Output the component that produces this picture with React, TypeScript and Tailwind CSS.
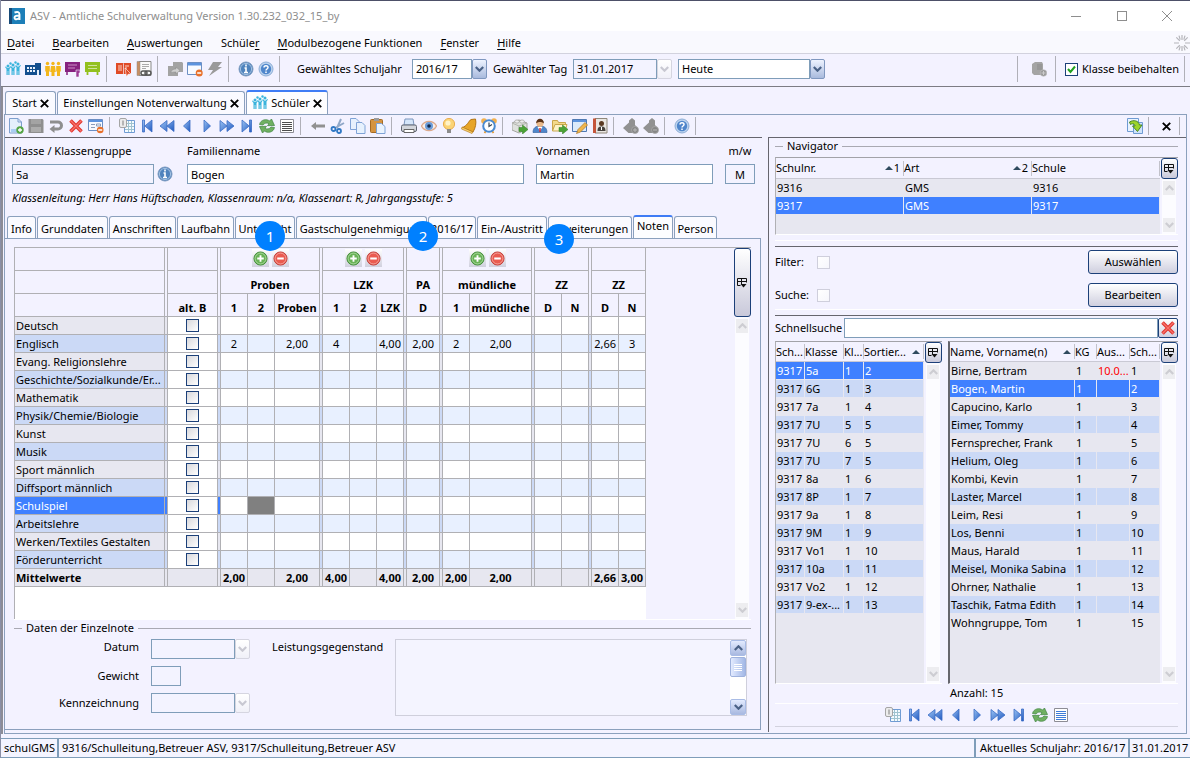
import type { ReactNode } from "react";

type IconProps = { children: ReactNode; size?: string };

const Svg = ({ children, size = "h-4 w-4" }: IconProps) => (
  <svg viewBox="0 0 16 16" className={`${size} shrink-0`} fill="none" aria-hidden="true">
    {children}
  </svg>
);

/* ---------- icons ---------- */

const GroupIcon = () => (
  <Svg>
    <g fill="#3bb4dc">
      <circle cx="3" cy="5" r="1.5" />
      <circle cx="8" cy="4" r="1.5" />
      <circle cx="13" cy="3" r="1.5" />
      <circle cx="5.5" cy="2.5" r="1.2" />
      <circle cx="10.500" cy="1.5" r="1.2" />
      <path d="M0 6l1.500 2v6h1.200v-4h.6v4h1.200V8L6 6l-.8-.6L3.800 7H2.200L.8 5.400zM5.300 5.500l1.200 2V14h1.200v-4h.6v4h1.200V7.500l1.200-2-.8-.6L8.800 6.500H7.200L6.100 4.900zM10.300 4.500l1.200 2V14h1.200v-4h.6v4h1.200V6.500L16 4.500l-.8-.6-1.400 1.600h-1.600l-1.100-1.600z" />
    </g>
  </Svg>
);

const SchoolIcon = () => (
  <Svg>
    <path d="M0 4h10V2h6v12H0z" fill="#134f8f" />
    <path d="M2 6h2v2H2zM5 6h2v2H5zM8 6h2v2H8zM2 9h2v2H2zM5 9h2v2H5zM8 9h2v2H8zM12 9h2v5h-2z" fill="#e8f0fa" />
  </Svg>
);

const PeopleIcon = () => (
  <Svg>
    <g fill="#f3b61b">
      <circle cx="2.500" cy="2.500" r="1.700" />
      <circle cx="8" cy="2.500" r="1.700" />
      <circle cx="13.500" cy="2.500" r="1.700" />
      <path d="M.2 5h4.600v5.500H4V15H1v-4.500H.2zM6 5h4l.8 6H9.500v4h-3v-4H5.200zM11.200 5h4.600v5.500H15V15h-3v-4.500h-.8z" />
    </g>
  </Svg>
);

const PurpleBoardIcon = () => (
  <Svg>
    <path d="M0 1h15v10H0z" fill="#86217f" />
    <path d="M3 4h9M3 7h7" stroke="#c98fc6" />
    <path d="M2 11v3" stroke="#86217f" strokeWidth="1.500" />
    <path d="M11 9h4v3h-1v4h-3z" fill="#9c3a95" stroke="#f3f2ff" strokeWidth=".6" />
  </Svg>
);

const GreenBoardIcon = () => (
  <Svg>
    <path d="M0 1h15v10H0z" fill="#93c01f" />
    <path d="M3 4.500h9M3 7.500h9" stroke="#cfe39a" />
    <path d="M2.500 11v3M12.500 11v3" stroke="#93c01f" strokeWidth="1.800" />
  </Svg>
);

const RedBookIcon = () => (
  <Svg>
    <path d="M0 2h7l.5 1L8 2h7v11H0z" fill="#e04a26" />
    <path d="M2 5h4M2 7h4M2 9h4M9 5h4M9 7h2" stroke="#fbd3c6" />
    <path d="M7.500 3v10" stroke="#f3f2ff" strokeWidth=".7" />
    <path d="M9 7l6 6-3 .3L10.500 16z" fill="#e04a26" stroke="#fff" strokeWidth=".6" />
  </Svg>
);

const NotebookIcon = () => (
  <Svg>
    <path d="M3 .5h12v14H3z" fill="#fafafa" stroke="#8a8a8a" />
    <path d="M1 .5h3v14H1z" fill="#c98e62" stroke="#8a8a8a" strokeWidth=".5" />
    <path d="M6 3.500h7M6 5.500h7M6 7.500h4" stroke="#aaa" />
    <rect x="5" y="10" width="6" height="4" rx="2" stroke="#555" strokeWidth="1.400" />
    <rect x="9" y="10" width="6" height="4" rx="2" stroke="#555" strokeWidth="1.400" />
  </Svg>
);

const GrayCopyIcon = () => (
  <Svg>
    <path d="M6 1h9l1 1v9h-5v4H1V5h5z" fill="#a3a3a3" />
    <path d="M4 12c0-3 2-4 5-4V6l4 3.500L9 13v-2c-2 0-4 0-5 1z" fill="#cfcfcf" stroke="#8b8b8b" strokeWidth=".5" />
  </Svg>
);

const WindowIcon = () => (
  <Svg>
    <path d="M.5 1.500h14v12H.5z" fill="#f7faff" stroke="#6c8fc4" />
    <path d="M1 2h13v2.500H1z" fill="#5c93de" />
    <circle cx="12.200" cy="12" r="3.500" fill="#e8702a" />
    <path d="M10.200 12h4" stroke="#fff" strokeWidth="1.500" />
  </Svg>
);

const BoltIcon = () => (
  <Svg>
    <path d="M6 1h9l-4 5h4L2 15l4-6H1z" fill="#9a9a9a" />
  </Svg>
);

const InfoIcon = () => (
  <Svg>
    <circle cx="8" cy="8" r="7" fill="#4f83bd" stroke="#7c9abf" />
    <circle cx="8" cy="8" r="5.600" stroke="#b9d0ea" strokeWidth=".8" />
    <path d="M8 3.500v2M6.500 7H8v4.500M6 11.500h4" stroke="#fff" strokeWidth="1.600" />
  </Svg>
);

const HelpIcon = () => (
  <Svg>
    <circle cx="8" cy="8" r="7" fill="#bcd3ee" stroke="#8eaed6" />
    <circle cx="8" cy="8" r="5.200" fill="#4f86cb" />
    <path d="M6 6.600C6 4 10 4 10 6.500 10 8 8 8 8 9.500M8 10.500v1.500" stroke="#fff" strokeWidth="1.500" />
  </Svg>
);

const NewIcon = () => (
  <Svg>
    <path d="M1.500.5H10L13.500 4v11h-12z" fill="#e4effb" stroke="#7e9fcd" />
    <path d="M10 .5V4h3.500" stroke="#7e9fcd" />
    <path d="M3 11h8v3H3z" fill="#a9cdf2" />
    <circle cx="12" cy="12" r="3.700" fill="#55a545" />
    <path d="M12 10v4M10 12h4" stroke="#fff" strokeWidth="1.300" />
  </Svg>
);

const SaveIcon = () => (
  <Svg>
    <path d="M.5 1h14l1 1v13H.5z" fill="#8f8f8f" />
    <path d="M3 1h10v5H3z" fill="#a3a3a3" />
    <path d="M3 9h10v5H3z" fill="#acacac" />
  </Svg>
);

const UndoIcon = () => (
  <Svg>
    <path d="M2 4h8a3.500 3.500 0 0 1 0 7H5" stroke="#8e8e8e" strokeWidth="3" />
    <path d="M6.500 7v8l-5-4z" fill="#8e8e8e" />
  </Svg>
);

const RedCrossIcon = () => (
  <Svg>
    <path d="M2.500 2.500l11 11M13.500 2.500l-11 11" stroke="#e0352f" strokeWidth="3.600" />
    <path d="M2.500 2.500l11 11M13.500 2.500l-11 11" stroke="#f8736b" strokeWidth="1.400" />
  </Svg>
);

const FormDeleteIcon = () => (
  <Svg>
    <path d="M.5 1.500h14v11H.5z" fill="#f7faff" stroke="#6c8fc4" />
    <path d="M1 2h13v2H1z" fill="#5c93de" />
    <path d="M3 6.500h4M3 9.500h4M8.500 6h4v2h-4z" stroke="#8c9dba" />
    <circle cx="12.200" cy="12" r="3.300" fill="#e8702a" />
    <path d="M10.200 12h4" stroke="#fff" strokeWidth="1.500" />
  </Svg>
);

const TableIcon = () => (
  <Svg>
    <path d="M5.500 2.500h10v12h-10z" fill="#f4faff" stroke="#6f9bd3" />
    <path d="M6 5.500h9M6 8.500h9M6 11.500h9M9.500 3v11M12.500 3v11" stroke="#9fc3cf" />
    <rect x=".5" y=".5" width="7" height="9" rx="1.500" fill="#ececec" stroke="#a5a5a5" />
    <path d="M3.500 2.500v5M4.500 2.500v5" stroke="#b5b5b5" />
  </Svg>
);

// gradient is defined once in App
const navFill = { fill: "url(#navBlue)", stroke: "#3a6cc4", strokeWidth: 0.8 };

const FirstIcon = () => (
  <Svg>
    <path d="M3.500 2h2v12h-2zM13 2v12L5.800 8z" {...navFill} />
  </Svg>
);

const RewindIcon = () => (
  <Svg>
    <path d="M8 2.500v11L1 8zM15 2.500v11L8 8z" {...navFill} />
  </Svg>
);

const PrevIcon = () => (
  <Svg>
    <path d="M11 2v12L4.500 8z" {...navFill} />
  </Svg>
);

const NextIcon = () => (
  <Svg>
    <path d="M5 2v12l6.500-6z" {...navFill} />
  </Svg>
);

const ForwardIcon = () => (
  <Svg>
    <path d="M1 2.500v11L8 8zM8 2.500v11L15 8z" {...navFill} />
  </Svg>
);

const LastIcon = () => (
  <Svg>
    <path d="M10.500 2h2v12h-2zM3 2v12l7.200-6z" {...navFill} />
  </Svg>
);

const RefreshIcon = () => (
  <Svg>
    <path d="M.5 6.500c1-5 7-6 10-3.500l2-2L15.500 7.500l-7 .2 1.500-2C8 4.500 5.500 5 4 7z" fill="#6fb061" stroke="#3f8440" strokeWidth=".7" />
    <path d="M15.500 9.500c-1 5-7 6-10 3.500l-2 2L.5 8.500l7-.2-1.500 2c2 1.200 4.500.7 6-1.300z" fill="#6fb061" stroke="#3f8440" strokeWidth=".7" />
  </Svg>
);

const ListIcon = ({ color = "#4d4d4d" }: { color?: string }) => (
  <Svg>
    <path d="M1.500 1.500h13v13h-13z" fill="#fff" stroke="#8d8d95" />
    <path d="M3 4.500h10M3 6.500h10M3 8.500h10M3 10.500h10M3 12.500h10" stroke={color} />
  </Svg>
);

const BackIcon = () => (
  <Svg>
    <path d="M1 8l5-4v2.500h9v3H6V12z" fill="#919191" />
  </Svg>
);

const CutIcon = () => (
  <Svg>
    <path d="M11 1 7 10M14 5 5 10" stroke="#90a8c8" strokeWidth="2" />
    <circle cx="3.500" cy="11" r="2" stroke="#2f78c4" strokeWidth="1.800" />
    <circle cx="9" cy="13" r="2" stroke="#2f78c4" strokeWidth="1.800" />
  </Svg>
);

const CopyIcon = () => (
  <Svg>
    <path d="M.5.5H6l3 3v8H.5z" fill="#e6f1fd" stroke="#7fa3d6" />
    <path d="M6.500 4.500H12l3 3v8H6.500z" fill="#e6f1fd" stroke="#7fa3d6" />
  </Svg>
);

const PasteIcon = () => (
  <Svg>
    <rect x=".5" y="1.500" width="12" height="13" rx="1" fill="#d59440" stroke="#a46a22" />
    <path d="M4 0h5v3H4z" fill="#9b9b9b" />
    <path d="M6.500 5.500h5l3.500 3v7H6.500z" fill="#eaf3fd" stroke="#7fa3d6" />
  </Svg>
);

const PrintIcon = () => (
  <Svg>
    <path d="M4 1h8l1 6H3z" fill="#d5e6fa" stroke="#7c96bd" />
    <rect x=".5" y="7" width="15" height="6.500" rx="1.500" fill="#d3d6dc" stroke="#5f6570" />
    <path d="M3 11.500h10v3H3z" fill="#fff" stroke="#666" />
  </Svg>
);

const EyeIcon = () => (
  <Svg>
    <path d="M.5 8C3.500 2 12.500 2 15.500 8c-3 6-12 6-15 0z" fill="#f9eee8" stroke="#dba98c" strokeWidth="1.300" />
    <circle cx="8" cy="8" r="4" fill="#6a9cd8" />
    <circle cx="8" cy="8" r="1.800" fill="#12294b" />
  </Svg>
);

const BulbIcon = () => (
  <Svg>
    <circle cx="8" cy="6" r="5.600" fill="#fbd476" stroke="#e9ae50" />
    <circle cx="7" cy="5" r="2.600" fill="#fff3c9" />
    <path d="M6 11h4v4H6z" fill="#8c8c8c" />
  </Svg>
);

const BellIcon = () => (
  <Svg>
    <path d="M14.500 1c1 4 0 9-2.500 13L1 9.500c5-1 7-7 9-8z" fill="#e7a529" stroke="#b27414" />
    <path d="M1 9l11 5-1 1.500L.5 11z" fill="#f6cf6b" stroke="#b27414" strokeWidth=".6" />
  </Svg>
);

const ClockIcon = () => (
  <Svg>
    <circle cx="3" cy="3" r="2.800" fill="#f1b04e" />
    <circle cx="13" cy="3" r="2.800" fill="#f1b04e" />
    <path d="M3.500 15l2-3M12.500 15l-2-3" stroke="#e39a34" strokeWidth="1.800" />
    <circle cx="8" cy="8" r="5.800" fill="#fff" stroke="#4a8ad0" strokeWidth="2" />
    <path d="M8 4.500v4l3-2" stroke="#345" strokeWidth="1.200" />
  </Svg>
);

const GreenArrow = () => (
  <path d="M7 9.500h3.500V7L16 11.500 10.500 16v-2.500H7z" fill="#4ba336" stroke="#2f7a22" strokeWidth=".5" />
);

const BoxIcon = () => (
  <Svg>
    <path d="M0 5l7-3 8 3v6l-8 4-7-3z" fill="#dfe1dd" stroke="#a3a59f" />
    <path d="M0 5l7 3 8-3M7 8v7" stroke="#b3b5af" />
    <ellipse cx="5" cy="3.500" rx="2.300" ry="1.600" fill="#eee" stroke="#93958f" strokeWidth=".6" />
    <ellipse cx="10" cy="3.500" rx="2.300" ry="1.600" fill="#eee" stroke="#93958f" strokeWidth=".6" />
    <GreenArrow />
  </Svg>
);

const PersonIcon = () => (
  <Svg>
    <path d="M1 14.500c0-5 3-6.500 7-6.500s7 1.500 7 6.500z" fill="#4f86cb" stroke="#2c5a98" strokeWidth=".6" />
    <path d="M5.500 9 8 13l2.500-4z" fill="#fff" />
    <path d="M8 10v4" stroke="#d22" strokeWidth="1.400" />
    <circle cx="8" cy="5.500" r="3.500" fill="#eab98c" />
    <path d="M4 5.500c0-6.500 8-6.500 8 0-2-2-6-2-8 0z" fill="#5b3217" />
  </Svg>
);

const FolderIcon = () => (
  <Svg>
    <path d="M.5 2.500h5l1 2h7v3H3L.5 13z" fill="#f3d98a" stroke="#c9a64c" />
    <path d="M3 6.500h12l-2 6.500H.5z" fill="#fdf3c9" stroke="#c9a64c" />
    <GreenArrow />
  </Svg>
);

const EditIcon = () => (
  <Svg>
    <path d="M.5 1.500h14v12H.5z" fill="#dceafa" stroke="#4f79b3" />
    <path d="M1 2h13v2H1z" fill="#5c93de" />
    <path d="M13 4.500l2.500 2.500-7 7-4 1.500L6 11.500z" fill="#f0b54c" stroke="#a9762a" strokeWidth=".7" />
  </Svg>
);

const BookIcon = () => (
  <Svg>
    <path d="M3 .5h12v14.500H3z" fill="#e9e6e1" stroke="#8f877a" />
    <path d="M1 .5h3v14.500H1z" fill="#c4553a" />
    <circle cx="9.500" cy="5.500" r="2.500" fill="#5b3a22" />
    <path d="M5.500 13c0-4 2-4.500 4-4.500s4 .5 4 4.500z" fill="#47433e" />
    <path d="M9.500 9v3" stroke="#fff" />
  </Svg>
);

const StampIcon = ({ minus }: { minus?: boolean }) => (
  <Svg>
    <path d="M0 10 6 4.500V2.500L9 0l3 2.500V7l3 3-3 5H5.500z" fill="#919191" />
    <circle cx="12" cy="12" r="3.500" fill="#868686" stroke="#a8a8a8" strokeWidth=".8" />
    <path d={minus ? "M10 12h4" : "M10 12h4M12 10v4"} stroke="#b8b8b8" />
  </Svg>
);

const DatabaseIcon = () => (
  <Svg>
    <path d="M1 3l3-2h7l1 2v9l-2 2H3l-2-2z" fill="#a4a4a4" />
    <path d="M6 4h5M6 6h5M6 8h5" stroke="#8b8b8b" />
    <circle cx="12.500" cy="12" r="3.300" fill="#9a9a9a" stroke="#c2c2c2" strokeWidth=".6" />
    <path d="M10.500 12h4M12.500 10v4" stroke="#ccc" />
  </Svg>
);

const ExportIcon = () => (
  <Svg>
    <path d="M.5.5h11v13H.5z" fill="#e9f3fe" stroke="#6f9bd3" />
    <path d="M6.500 4.500h9v11h-9z" fill="#cfe3fa" stroke="#6f9bd3" />
    <path d="M2.500 4c4-2.500 9-1.500 10 3h2.500l-4.500 6.500L5.500 8H8c0-2-2.500-3-4.500-1.500z" fill="#9bd42c" stroke="#3f7d1d" strokeWidth=".9" />
  </Svg>
);

const CloseIcon = () => (
  <svg viewBox="0 0 9 9" className="h-[9px] w-[9px] shrink-0" aria-hidden="true">
    <path d="M.8.8l7.400 7.400M8.200.8L.8 8.200" stroke="#000" strokeWidth="1.900" />
  </svg>
);

const Chevron = ({ up, color = "#4a6186" }: { up?: boolean; color?: string }) => (
  <svg viewBox="0 0 9 6" className="h-[6px] w-[9px]" fill="none" aria-hidden="true">
    <path d={up ? "M.8 5 4.500 1.300 8.200 5" : "M.8 1 4.500 4.700 8.200 1"} stroke={color} strokeWidth="2.200" />
  </svg>
);

const SortIcon = () => (
  <svg viewBox="0 0 8 4" className="h-1 w-2 shrink-0" aria-hidden="true">
    <path d="M4 0l4 4H0z" fill="#2f4a5e" />
  </svg>
);

const ColumnsIcon = () => (
  <svg viewBox="0 0 10 10" className="h-[10px] w-[10px]" fill="none" aria-hidden="true">
    <path d="M.5.5h9v4M.5.5v7h3M.5 3.500h9M4.500.5v6" stroke="#111" />
    <path d="M3.500 6h6L6.500 9.500z" fill="#111" />
  </svg>
);

/* ---------- small controls ---------- */

const ToolButton = ({ label, children }: { label: string; children: ReactNode }) => (
  <button aria-label={label} className="flex h-5 w-5 items-center justify-center">
    {children}
  </button>
);

const Sep = ({ className = "h-[18px]" }: { className?: string }) => (
  <span className={`w-px shrink-0 bg-[#b0b0b8] ${className}`} />
);

const Arrow = ({ disabled }: { disabled?: boolean }) => (
  <span
    className={
      disabled
        ? "pointer-events-none absolute inset-y-0 right-0 flex w-[15px] items-center justify-center rounded-xs border border-[#d5d5e0] bg-linear-to-b from-white to-[#f0f0f8]"
        : "pointer-events-none absolute inset-y-0 right-0 flex w-[15px] items-center justify-center rounded-xs border border-[#7f97bf] bg-linear-to-b from-[#eef3ff] to-[#a9badd]"
    }
  >
    <Chevron color={disabled ? "#c8c8d2" : "#4a6186"} />
  </span>
);

type ComboProps = { label: string; value: string; width: string; disabled?: boolean };

const Combo = ({ label, value, width, disabled }: ComboProps) => (
  <span className={`relative flex h-5 ${width}`}>
    <select
      aria-label={label}
      disabled={disabled}
      className={`mr-[15px] h-5 w-full appearance-none border border-[#7f9db9] px-[3px] leading-4 ${
        disabled ? "bg-[#f3f3ff]" : "bg-white"
      }`}
    >
      <option>{value}</option>
    </select>
    <Arrow disabled={disabled} />
  </span>
);

const CheckBox = ({ label, disabled }: { label: string; disabled?: boolean }) => (
  <input
    type="checkbox"
    aria-label={label}
    disabled={disabled}
    className={`block h-[13px] w-[13px] shrink-0 appearance-none border bg-linear-to-br ${
      disabled ? "border-[#cfcfdc] from-white to-[#f6f6fc]" : "border-[#1c4079] from-[#d8d8dc] to-white"
    }`}
  />
);

const ColumnsButton = ({ height }: { height: string }) => (
  <button
    aria-label="Spalten wählen"
    className={`flex w-[17px] shrink-0 items-center justify-center rounded-[3px] border border-[#1c4079] bg-linear-to-b from-white to-[#c9c9da] ${height}`}
  >
    <ColumnsIcon />
  </button>
);

/* inactive scrollbar with pale arrows */
const ScrollTrack = () => (
  <div className="flex w-[14px] flex-1 flex-col items-center justify-between bg-[#fcfcff] py-[2px]">
    <span className="flex h-[14px] w-3 items-center justify-center bg-[#ededf0]">
      <Chevron up color="#cdcdd2" />
    </span>
    <span className="flex h-[14px] w-3 items-center justify-center bg-[#ededf0]">
      <Chevron color="#cdcdd2" />
    </span>
  </div>
);

/* ---------- data ---------- */

const menus = [
  ["", "D", "atei"],
  ["", "B", "earbeiten"],
  ["", "A", "uswertungen"],
  ["Schüle", "r", ""],
  ["", "M", "odulbezogene Funktionen"],
  ["", "F", "enster"],
  ["", "H", "ilfe"],
];

const pupilTabs = [
  { name: "Info", width: "w-[29px]" },
  { name: "Grunddaten", width: "w-[71px]" },
  { name: "Anschriften", width: "w-[67px]" },
  { name: "Laufbahn", width: "w-[57px]" },
  { name: "Unterricht", width: "w-[60px]" },
  { name: "Gastschulgenehmigung", width: "w-[131px]" },
  { name: "2016/17", width: "w-[48px]" },
  { name: "Ein-/Austritt", width: "w-[70px]" },
  { name: "Erweiterungen", width: "w-[84px]" },
  { name: "Noten", width: "w-[40px]" },
  { name: "Person", width: "w-[43px]" },
];

const GAP = "gap";

// one entry per column of the marks table, spacer columns included
const markColumns = [
  GAP, "alt. B", GAP, "1", "2", "Proben", GAP, "1", "2", "LZK", GAP, "D",
  GAP, "1", "mündliche", GAP, "D", "N", GAP, "D", "N",
];

const markWidths = [
  "w-[150px]", "w-[3px]", "w-[50px]", "w-[3px]", "w-[27px]", "w-[27px]", "w-[45px]",
  "w-[3px]", "w-[27px]", "w-[27px]", "w-[27px]", "w-[3px]", "w-[33px]", "w-[3px]",
  "w-[27px]", "w-[62px]", "w-[3px]", "w-[27px]", "w-[27px]", "w-[3px]", "w-[27px]", "w-[27px]",
];

const markGroups = [
  { name: "", span: 1 },
  { name: GAP, span: 1 },
  { name: "", span: 1 },
  { name: GAP, span: 1 },
  { name: "Proben", span: 3, editable: true },
  { name: GAP, span: 1 },
  { name: "LZK", span: 3, editable: true },
  { name: GAP, span: 1 },
  { name: "PA", span: 1 },
  { name: GAP, span: 1 },
  { name: "mündliche", span: 2, editable: true },
  { name: GAP, span: 1 },
  { name: "ZZ", span: 2 },
  { name: GAP, span: 1 },
  { name: "ZZ", span: 2 },
];

const subjects = [
  "Deutsch",
  "Englisch",
  "Evang. Religionslehre",
  "Geschichte/Sozialkunde/Er...",
  "Mathematik",
  "Physik/Chemie/Biologie",
  "Kunst",
  "Musik",
  "Sport männlich",
  "Diffsport männlich",
  "Schulspiel",
  "Arbeitslehre",
  "Werken/Textiles Gestalten",
  "Förderunterricht",
];

// keyed by index in markColumns
const englishMarks: Record<number, string> = {
  3: "2", 5: "2,00", 7: "4", 9: "4,00", 11: "2,00", 13: "2", 14: "2,00", 19: "2,66", 20: "3",
};

const averages: Record<number, string> = {
  3: "2,00", 5: "2,00", 7: "4,00", 9: "4,00", 11: "2,00", 13: "2,00", 14: "2,00", 19: "2,66", 20: "3,00",
};

const classes = [
  ["9317", "5a", "1", "2"],
  ["9317", "6G", "1", "3"],
  ["9317", "7a", "1", "4"],
  ["9317", "7U", "5", "5"],
  ["9317", "7U", "6", "5"],
  ["9317", "7U", "7", "5"],
  ["9317", "8a", "1", "6"],
  ["9317", "8P", "1", "7"],
  ["9317", "9a", "1", "8"],
  ["9317", "9M", "1", "9"],
  ["9317", "Vo1", "1", "10"],
  ["9317", "10a", "1", "11"],
  ["9317", "Vo2", "1", "12"],
  ["9317", "9-ex-...", "1", "13"],
];

const pupils = [
  ["Birne, Bertram", "1", "10.0...", "1"],
  ["Bogen, Martin", "1", "", "2"],
  ["Capucino, Karlo", "1", "", "3"],
  ["Eimer, Tommy", "1", "", "4"],
  ["Fernsprecher, Frank", "1", "", "5"],
  ["Helium, Oleg", "1", "", "6"],
  ["Kombi, Kevin", "1", "", "7"],
  ["Laster, Marcel", "1", "", "8"],
  ["Leim, Resi", "1", "", "9"],
  ["Los, Benni", "1", "", "10"],
  ["Maus, Harald", "1", "", "11"],
  ["Meisel, Monika Sabina", "1", "", "12"],
  ["Ohrner, Nathalie", "1", "", "13"],
  ["Taschik, Fatma Edith", "1", "", "14"],
  ["Wohngruppe, Tom", "1", "", "15"],
];

/* ---------- top of the window ---------- */

const TitleBar = () => (
  <div className="flex h-[31px] items-center border-t border-[#4d5068] bg-white pl-2 text-[#8e8e8e]">
    <svg viewBox="0 0 16 16" className="mr-[5px] h-4 w-4" aria-hidden="true">
      <path d="M0 0h16v16H0z" fill="#1d7fb8" />
      <path d="M0 0h3v16H0z" fill="#174a78" />
      <path d="M5.500 4.500c3-1 5-.5 5 2V12M10.500 7.500c-3 0-5 .3-5 2.300s3.500 2 5-.3" stroke="#fff" strokeWidth="1.900" fill="none" />
    </svg>
    <span>ASV - Amtliche Schulverwaltung Version 1.30.232_032_15_by</span>
    <div className="ml-auto flex">
      <button aria-label="Minimieren" className="flex h-[30px] w-[46px] items-center justify-center">
        <span className="h-px w-[10px] bg-[#8e8e8e]" />
      </button>
      <button aria-label="Maximieren" className="flex h-[30px] w-[45px] items-center justify-center">
        <span className="h-[10px] w-[10px] border border-[#8e8e8e]" />
      </button>
      <button aria-label="Schließen" className="flex h-[30px] w-[46px] items-center justify-center">
        <svg viewBox="0 0 10 10" className="h-[10px] w-[10px]">
          <path d="M0 0l10 10M10 0L0 10" stroke="#8e8e8e" />
        </svg>
      </button>
    </div>
  </div>
);

const MenuBar = () => (
  <nav className="flex h-[23px] items-center gap-[18px] border-b border-[#d2d2de] bg-[#f9f9fe] pl-[6px] pt-[2px]">
    {menus.map(([before, key, after]) => (
      <a href="#" key={before + key + after}>
        {before}
        <span className="underline underline-offset-2">{key}</span>
        {after}
      </a>
    ))}
    <svg viewBox="0 0 16 16" className="ml-auto h-4 w-4" aria-hidden="true">
      <path
        d="M8 0v5M8 11v5M0 8h5M11 8h5M2.300 2.300l3.500 3.500M10.200 10.200l3.500 3.500M13.700 2.300l-3.500 3.500M5.800 10.200l-3.500 3.500M5 .6l1.200 4M11 .6l-1.200 4M5 15.400l1.200-4M11 15.400l-1.200-4"
        stroke="#b5b5ba"
        strokeWidth="1.200"
      />
    </svg>
  </nav>
);

const MainToolbar = () => (
  <div className="flex h-[33px] items-center border-b border-[#7c7c84] bg-[#f3f2ff] pb-[2px] pl-[2px]">
    <ToolButton label="Schüler"><GroupIcon /></ToolButton>
    <ToolButton label="Schulen"><SchoolIcon /></ToolButton>
    <ToolButton label="Personen"><PeopleIcon /></ToolButton>
    <ToolButton label="Lehrer"><PurpleBoardIcon /></ToolButton>
    <ToolButton label="Klassen"><GreenBoardIcon /></ToolButton>
    <Sep className="ml-[3px] mr-[7px] h-[26px]" />
    <ToolButton label="Unterricht"><RedBookIcon /></ToolButton>
    <ToolButton label="Notizbuch"><NotebookIcon /></ToolButton>
    <Sep className="ml-[3px] mr-[7px] h-[26px]" />
    <ToolButton label="Übernehmen"><GrayCopyIcon /></ToolButton>
    <ToolButton label="Fenster schließen"><WindowIcon /></ToolButton>
    <ToolButton label="Schnellzugriff"><BoltIcon /></ToolButton>
    <Sep className="ml-[3px] mr-[7px] h-[26px]" />
    <ToolButton label="Info"><InfoIcon /></ToolButton>
    <ToolButton label="Hilfe"><HelpIcon /></ToolButton>
    <Sep className="ml-[3px] mr-[17px] h-[26px]" />
    <span className="w-[115px]">Gewähltes Schuljahr</span>
    <Combo label="Gewähltes Schuljahr" value="2016/17" width="w-[75px]" />
    <span className="ml-[6px] w-20">Gewählter Tag</span>
    <Combo label="Gewählter Tag" value="31.01.2017" width="w-[99px]" disabled />
    <span className="w-[6px]" />
    <Combo label="Tag" value="Heute" width="w-[147px]" />
    <Sep className="ml-auto mr-[11px] h-[26px]" />
    <ToolButton label="Datenbank"><DatabaseIcon /></ToolButton>
    <Sep className="ml-[6px] mr-[9px] h-[26px]" />
    <label className="flex items-center gap-1">
      <span className="relative flex">
        <input type="checkbox" defaultChecked className="h-[13px] w-[13px] appearance-none border border-[#1c4079] bg-white" />
        <svg viewBox="0 0 13 13" className="pointer-events-none absolute inset-0 h-[13px] w-[13px]" fill="none">
          <path d="M3 6l2.500 3L10 3.500" stroke="#21a121" strokeWidth="2" />
        </svg>
      </span>
      Klasse beibehalten
    </label>
    <Sep className="mx-[5px] h-[26px]" />
  </div>
);

const WindowTabs = () => (
  <div className="flex h-[27px] items-end gap-px pl-px">
    <button className="flex h-[23px] w-[51px] items-center justify-center gap-[3px] rounded-t-[3px] border border-b-0 border-[#8ba0bd] bg-[#fafaff]">
      Start <CloseIcon />
    </button>
    <button className="flex h-[23px] w-[188px] items-center justify-center gap-[3px] rounded-t-[3px] border border-b-0 border-[#8ba0bd] bg-[#fafaff]">
      Einstellungen Notenverwaltung <CloseIcon />
    </button>
    <button className="flex h-6 w-[82px] items-center justify-center gap-[3px] rounded-t-[3px] border border-b-0 border-t-2 border-[#8ba0bd] border-t-[#3f7cf5] bg-[#fdfdff]">
      <GroupIcon /> Schüler <CloseIcon />
    </button>
  </div>
);

const PupilToolbar = () => (
  <div className="flex h-[22px] items-center pl-px">
    <ToolButton label="Neu"><NewIcon /></ToolButton>
    <ToolButton label="Speichern"><SaveIcon /></ToolButton>
    <ToolButton label="Rückgängig"><UndoIcon /></ToolButton>
    <ToolButton label="Löschen"><RedCrossIcon /></ToolButton>
    <ToolButton label="Formular leeren"><FormDeleteIcon /></ToolButton>
    <Sep className="ml-[3px] mr-[7px] h-[18px]" />
    <ToolButton label="Tabelle"><TableIcon /></ToolButton>
    <ToolButton label="Erster"><FirstIcon /></ToolButton>
    <ToolButton label="Zurückspulen"><RewindIcon /></ToolButton>
    <ToolButton label="Voriger"><PrevIcon /></ToolButton>
    <ToolButton label="Nächster"><NextIcon /></ToolButton>
    <ToolButton label="Vorspulen"><ForwardIcon /></ToolButton>
    <ToolButton label="Letzter"><LastIcon /></ToolButton>
    <ToolButton label="Aktualisieren"><RefreshIcon /></ToolButton>
    <ToolButton label="Liste"><ListIcon /></ToolButton>
    <Sep className="ml-[3px] mr-[7px] h-[18px]" />
    <ToolButton label="Zurück"><BackIcon /></ToolButton>
    <ToolButton label="Ausschneiden"><CutIcon /></ToolButton>
    <ToolButton label="Kopieren"><CopyIcon /></ToolButton>
    <ToolButton label="Einfügen"><PasteIcon /></ToolButton>
    <Sep className="ml-[3px] mr-[7px] h-[18px]" />
    <ToolButton label="Drucken"><PrintIcon /></ToolButton>
    <ToolButton label="Vorschau"><EyeIcon /></ToolButton>
    <ToolButton label="Tipp"><BulbIcon /></ToolButton>
    <ToolButton label="Erinnerung"><BellIcon /></ToolButton>
    <ToolButton label="Wecker"><ClockIcon /></ToolButton>
    <Sep className="ml-[3px] mr-[7px] h-[18px]" />
    <ToolButton label="Modul"><BoxIcon /></ToolButton>
    <ToolButton label="Person"><PersonIcon /></ToolButton>
    <ToolButton label="Ordner"><FolderIcon /></ToolButton>
    <ToolButton label="Bearbeiten"><EditIcon /></ToolButton>
    <ToolButton label="Adressbuch"><BookIcon /></ToolButton>
    <Sep className="ml-[3px] mr-[7px] h-[18px]" />
    <ToolButton label="Hinzufügen"><StampIcon /></ToolButton>
    <ToolButton label="Entfernen"><StampIcon minus /></ToolButton>
    <Sep className="ml-[3px] mr-[7px] h-[18px]" />
    <ToolButton label="Hilfe"><HelpIcon /></ToolButton>
    <Sep className="ml-[3px] mr-[7px] h-[18px]" />
    <div className="ml-auto flex items-center pr-[6px]">
      <ToolButton label="Exportieren"><ExportIcon /></ToolButton>
      <Sep className="ml-[3px] mr-[7px] h-[18px]" />
      <ToolButton label="Schließen"><CloseIcon /></ToolButton>
      <Sep className="ml-[3px] h-[18px]" />
    </div>
  </div>
);

/* ---------- pupil form ---------- */

const PupilFields = () => (
  <div className="flex items-start pl-[7px] pt-[5px]">
    <label className="flex w-[142px] flex-col gap-[5px]">
      Klasse / Klassengruppe
      <input readOnly defaultValue="5a" className="h-5 border border-[#7f9db9] bg-[#f3f3ff] px-[3px]" />
    </label>
    <button aria-label="Info zur Klasse" className="ml-[3px] mt-[21px] flex h-5 w-[30px] items-center">
      <InfoIcon />
    </button>
    <label className="flex w-[337px] flex-col gap-[5px]">
      Familienname
      <input defaultValue="Bogen" className="h-5 border border-[#7f9db9] bg-white px-[3px]" />
    </label>
    <label className="ml-3 flex w-[177px] flex-col gap-[5px]">
      Vornamen
      <input defaultValue="Martin" className="h-5 border border-[#7f9db9] bg-white px-[3px]" />
    </label>
    <label className="ml-3 flex w-[30px] flex-col gap-[5px] text-center">
      m/w
      <input readOnly defaultValue="M" className="h-5 border border-[#7f9db9] bg-[#f3f3ff] text-center" />
    </label>
  </div>
);

const PlusMinus = () => (
  <div className="flex justify-center gap-[3px]">
    <button aria-label="Spalte hinzufügen" className="flex h-[18px] w-[17px] items-center justify-center bg-linear-to-b from-white to-[#d0d0de]">
      <Svg size="h-[15px] w-[15px]">
        <circle cx="8" cy="8" r="7" fill="#69b357" stroke="#3f8a36" />
        <circle cx="8" cy="8" r="5.800" stroke="#b9e0ae" strokeWidth=".8" />
        <path d="M8 4.500v7M4.500 8h7" stroke="#fff" strokeWidth="2" />
      </Svg>
    </button>
    <button aria-label="Spalte entfernen" className="flex h-[18px] w-[17px] items-center justify-center bg-linear-to-b from-white to-[#d0d0de]">
      <Svg size="h-[15px] w-[15px]">
        <circle cx="8" cy="8" r="7" fill="#ea5b50" stroke="#bf3a35" />
        <circle cx="8" cy="8" r="5.800" stroke="#f7b4ad" strokeWidth=".8" />
        <path d="M4.500 8h7" stroke="#fff" strokeWidth="2.200" />
      </Svg>
    </button>
  </div>
);

const MarksTable = () => (
  <table className="w-[632px] table-fixed border-separate border-spacing-0 border-l border-t border-[#b0b0b4]">
    <colgroup>
      {markWidths.map((width, i) => (
        <col key={i} className={width} />
      ))}
    </colgroup>
    <thead className="bg-[#f3f2ff]">
      <tr className="h-[23px]">
        {markGroups.map((group, i) => (
          <th
            key={i}
            colSpan={group.span}
            className={`border-r border-[#b0b0b4] p-0 pt-px align-top ${group.name === GAP ? "" : "border-b"}`}
          >
            {group.editable && <PlusMinus />}
          </th>
        ))}
      </tr>
      <tr className="h-[23px]">
        {markGroups.map((group, i) => (
          <th
            key={i}
            colSpan={group.span}
            className={`border-r border-[#b0b0b4] p-0 pt-[6px] font-bold leading-4 ${group.name === GAP ? "" : "border-b"}`}
          >
            {group.name === GAP ? "" : group.name}
          </th>
        ))}
      </tr>
      <tr className="h-[23px]">
        <th className="border-b border-r border-[#b0b0b4] p-0" />
        {markColumns.map((column, i) => (
          <th key={i} className="overflow-hidden whitespace-nowrap border-b border-r border-[#b0b0b4] p-0 pt-[6px] font-bold leading-4">
            {column === GAP ? "" : column}
          </th>
        ))}
      </tr>
    </thead>
    <tbody>
      {subjects.map((subject, row) => {
        const even = row % 2 === 1;
        const selected = subject === "Schulspiel";
        const spacer = even ? "bg-[#cbd9f6]" : "bg-[#e7e7f0]";
        const head = selected ? "bg-[#3f80ff] text-white" : spacer;
        const cell = even ? "bg-[#e8f0ff]" : "bg-white";
        return (
          <tr key={subject} className="h-[18px]">
            <td className={`overflow-hidden whitespace-nowrap border-b border-r border-[#b0b0b4] p-0 pl-px leading-4 ${head}`}>
              {subject}
            </td>
            {markColumns.map((column, i) => {
              let color = cell;
              if (column === GAP) color = selected && i < 3 ? "bg-[#3f80ff]" : spacer;
              if (column === "alt. B") color = "bg-white";
              if (selected && i === 4) color = "bg-[#808080]";
              return (
                <td key={i} className={`border-b border-r border-[#b0b0b4] p-0 text-center leading-4 ${color}`}>
                  {column === "alt. B" ? (
                    <div className="flex justify-center">
                      <CheckBox label={`alt. B ${subject}`} />
                    </div>
                  ) : (
                    row === 1 && englishMarks[i]
                  )}
                </td>
              );
            })}
          </tr>
        );
      })}
      <tr className="h-[18px] bg-[#e7e7f0] font-bold">
        <td className="border-b border-r border-[#b0b0b4] p-0 pl-px leading-4">Mittelwerte</td>
        {markColumns.map((_, i) => (
          <td key={i} className="border-b border-r border-[#b0b0b4] p-0 text-center leading-4">
            {averages[i]}
          </td>
        ))}
      </tr>
    </tbody>
  </table>
);

const MarkDetails = () => (
  <fieldset className="border-t border-[#a9a9b2]">
    <legend className="ml-2 px-1 leading-4">Daten der Einzelnote</legend>
    <div className="flex items-start pb-[13px] pt-[3px]">
      <div className="grid grid-cols-[125px_100px] gap-x-3 gap-y-[7px] text-right">
        <span>Datum</span>
        <Combo label="Datum" value="" width="w-[99px]" disabled />
        <label htmlFor="weight" className="leading-5">Gewicht</label>
        <input id="weight" readOnly className="h-5 w-[30px] border border-[#7f9db9] bg-[#f3f3ff]" />
        <span className="leading-5">Kennzeichnung</span>
        <Combo label="Kennzeichnung" value="" width="w-[99px]" disabled />
      </div>
      <label htmlFor="subject" className="ml-[21px] w-[123px]">Leistungsgegenstand</label>
      <div className="mr-[4px] flex h-[77px] flex-1 border border-[#cfcfdc] bg-[#f4f4ff]">
        <textarea id="subject" readOnly className="flex-1 resize-none bg-transparent" />
        <div className="flex w-4 flex-col bg-white">
          <span className="flex h-4 items-center justify-center rounded-xs border border-[#a9bce6] bg-linear-to-b from-[#e3ebff] to-[#a9b9e0]">
            <Chevron up />
          </span>
          <span className="mt-px flex h-5 flex-col items-center justify-center gap-px rounded-xs border border-[#9fb2dd] bg-linear-to-r from-[#e3ebff] to-[#a3b8e6]">
            <span className="h-px w-2 bg-white" />
            <span className="h-px w-2 bg-white" />
            <span className="h-px w-2 bg-white" />
            <span className="h-px w-2 bg-white" />
          </span>
          <span className="mt-auto flex h-4 items-center justify-center rounded-xs border border-[#a9bce6] bg-linear-to-b from-[#e3ebff] to-[#a9b9e0]">
            <Chevron />
          </span>
        </div>
      </div>
    </div>
  </fieldset>
);

const PupilPane = () => (
  <section className="mb-[3px] mr-[6px] flex min-w-0 flex-1 flex-col border-t border-[#66666e]">
    <PupilFields />
    <p className="pl-[7px] pt-[6px] italic">
      Klassenleitung: Herr Hans Hüftschaden, Klassenraum: n/a, Klassenart: R, Jahrgangsstufe: 5
    </p>

    <div className="relative mt-[8px] flex h-[24px] items-end gap-px pl-[2px]">
      {pupilTabs.map((tab) => (
        <button
          key={tab.name}
          className={
            tab.name === "Noten"
              ? `h-[23px] shrink-0 rounded-t-[3px] border border-b-0 border-t-2 border-[#8ba0bd] border-t-[#3f7cf5] bg-[#fdfdff] pb-1 ${tab.width}`
              : `h-[22px] shrink-0 whitespace-nowrap rounded-t-[3px] border border-b-0 border-[#8ba0bd] bg-[#fafaff] pt-[2px] ${tab.width}`
          }
        >
          {tab.name}
        </button>
      ))}
      {/* numbered callouts over the tabs */}
      <span className="absolute left-[250px] top-[7px] flex h-[30px] w-[30px] items-center justify-center rounded-full bg-[#0080ff] text-[15px] text-white">
        1
      </span>
      <span className="absolute left-[403px] top-[7px] flex h-[30px] w-[30px] items-center justify-center rounded-full bg-[#0080ff] text-[15px] text-white">
        2
      </span>
      <span className="absolute left-[539px] top-[10px] flex h-[30px] w-[30px] items-center justify-center rounded-full bg-[#0080ff] text-[15px] text-white">
        3
      </span>
    </div>

    <div className="mr-[1px] flex flex-1 flex-col border-b border-r border-t border-[#8ba0bd] pl-[9px] pr-[9px] pt-2">
      <div className="flex flex-1 border-b border-white">
        <div className="flex flex-col bg-white">
          <MarksTable />
          <div className="flex-1 border-l border-[#b0b0b4]" />
        </div>
        <div className="flex-1 border-t border-[#b0b0b4]" />
        <div className="flex w-[18px] flex-col items-center border-t border-[#b0b0b4]">
          <ColumnsButton height="h-[69px]" />
          <ScrollTrack />
        </div>
      </div>
      <MarkDetails />
    </div>
  </section>
);

/* ---------- navigator ---------- */

type GridProps = {
  columns: { title: string; width: string; sort?: string }[];
  rows: string[][];
  selected: number;
  striped?: boolean;
  className: string;
};

const DataGrid = ({ columns, rows, selected, striped, className }: GridProps) => (
  <div className={`flex border-t border-t-[#a2a2a8] ${className}`}>
    <div className="flex-1 bg-[#e7e7f0]">
      <table className="w-full table-fixed border-separate border-spacing-0">
        <thead className="bg-[#f3f2ff]">
          <tr className={striped ? "h-5" : "h-[21px]"}>
            {columns.map((column) => (
              <th key={column.title} className={`border-b border-b-[#c9c9d4] p-0 text-left font-normal ${column.width}`}>
                <div className="flex h-[15px] items-center whitespace-nowrap border-r border-[#c2c2ca] leading-4">
                  {column.title}
                  {column.sort !== undefined && (
                    <span className="ml-auto flex items-center gap-px pr-[3px]">
                      <SortIcon />
                      {column.sort}
                    </span>
                  )}
                </div>
              </th>
            ))}
          </tr>
        </thead>
        <tbody>
          {rows.map((row, i) => {
            let color = striped && i % 2 === 1 ? "bg-[#cbd9f6]" : "bg-[#e7e7f0]";
            if (i === selected) color = "bg-[#3f80ff] text-white";
            return (
              <tr key={i} className={`h-[18px] ${color}`}>
                {row.map((value, j) => (
                  <td
                    key={j}
                    className={`whitespace-nowrap border-b border-r border-[#e7e7f0] p-0 pl-px leading-4 ${
                      value === "10.0..." ? "text-[#ff0000]" : ""
                    }`}
                  >
                    {value}
                  </td>
                ))}
              </tr>
            );
          })}
        </tbody>
      </table>
    </div>
    <div className="flex w-[18px] flex-col items-center">
      <ColumnsButton height="h-[21px]" />
      <ScrollTrack />
    </div>
  </div>
);

const Divider = () => <div className="h-[7px] border-b border-t border-b-[#66666e] border-t-white" />;

const Navigator = () => (
  <section className="mb-px flex w-[418px] shrink-0 flex-col border-l border-t border-[#66666e] pl-[6px] pr-[8px]">
    <fieldset className="border-t border-[#a9a9b2]">
      <legend className="ml-2 px-1 leading-4">Navigator</legend>
      <DataGrid
        className="mt-[3px] h-[78px] border-b border-l border-b-white border-l-[#b0b0b4]"
        columns={[
          { title: "Schulnr.", width: "w-[128px]", sort: "1" },
          { title: "Art", width: "w-[128px]", sort: "2" },
          { title: "Schule", width: "w-[128px]" },
        ]}
        rows={[
          ["9316", "GMS", "9316"],
          ["9317", "GMS", "9317"],
        ]}
        selected={1}
      />
    </fieldset>

    <div className="mt-[5px]">
      <Divider />
    </div>
    {[
      ["Filter:", "Auswählen"],
      ["Suche:", "Bearbeiten"],
    ].map(([label, action], i) => (
      <div key={label} className={`flex h-6 items-center ${i === 0 ? "mt-[3px]" : "mb-[2px] mt-[9px]"}`}>
        <span className="w-[42px]">{label}</span>
        <CheckBox label={label} disabled />
        <button className="ml-auto h-6 w-[90px] rounded-[3px] border border-[#1c4079] bg-linear-to-b from-white to-[#cfcfdf]">
          {action}
        </button>
      </div>
    ))}
    <Divider />

    <div className="mt-[2px] flex h-5 items-center">
      <label htmlFor="quick" className="w-[69px]">Schnellsuche</label>
      <input id="quick" className="h-5 min-w-0 flex-1 border border-[#7f9db9] bg-white px-[3px]" />
      <button
        aria-label="Suche leeren"
        className="flex h-5 w-5 items-center justify-center rounded-xs border border-[#1c4079] bg-linear-to-b from-white to-[#cfcfdf]"
      >
        <RedCrossIcon />
      </button>
    </div>

    <div className="mt-[3px] flex flex-1">
      <DataGrid
        className="w-[167px] border-b border-l border-b-white border-l-[#b0b0b4]"
        striped
        columns={[
          { title: "Sch...", width: "w-[29px]" },
          { title: "Klasse", width: "w-[39px]" },
          { title: "Kl...", width: "w-[20px]" },
          { title: "Sortier...", width: "w-[60px]", sort: "" },
        ]}
        rows={classes}
        selected={0}
      />
      <DataGrid
        className="ml-[6px] flex-1 border-b border-l-2 border-b-white border-l-[#66666e]"
        striped
        columns={[
          { title: "Name, Vorname(n)", width: "w-[125px]", sort: "" },
          { title: "KG", width: "w-[22px]" },
          { title: "Aus...", width: "w-[33px]" },
          { title: "Sch...", width: "w-[30px]" },
        ]}
        rows={pupils}
        selected={1}
      />
    </div>

    <p className="pl-[175px] pt-px">Anzahl: 15</p>
    <div className="mb-[5px] mt-[2px] flex h-6 items-center justify-center gap-px border-b border-t border-b-[#d2d2de] border-t-white">
      <ToolButton label="Tabelle"><TableIcon /></ToolButton>
      <ToolButton label="Erster"><FirstIcon /></ToolButton>
      <ToolButton label="Zurückspulen"><RewindIcon /></ToolButton>
      <ToolButton label="Voriger"><PrevIcon /></ToolButton>
      <ToolButton label="Nächster"><NextIcon /></ToolButton>
      <ToolButton label="Vorspulen"><ForwardIcon /></ToolButton>
      <ToolButton label="Letzter"><LastIcon /></ToolButton>
      <ToolButton label="Aktualisieren"><RefreshIcon /></ToolButton>
      <ToolButton label="Liste"><ListIcon color="#3f7cd8" /></ToolButton>
    </div>
  </section>
);

const StatusBar = () => (
  <footer className="mt-1 flex h-5 items-center border-y border-[#7f9db9] bg-[#f4f4ff] leading-[18px]">
    <span className="w-[58px] border-r-2 border-[#7f9db9] pl-[3px]">schulGMS</span>
    <span className="flex-1 pl-[3px]">9316/Schulleitung,Betreuer ASV, 9317/Schulleitung,Betreuer ASV</span>
    <span className="w-[156px] border-x-2 border-[#7f9db9] pl-1">Aktuelles Schuljahr: 2016/17</span>
    <span className="w-[60px] pl-[2px]">31.01.2017</span>
  </footer>
);

const App = () => {
  return (
    <div className="flex min-h-screen flex-col border-l border-[#8a8fa6] bg-[#f3f2ff] font-['Noto_Sans',sans-serif] text-[11px] leading-4 text-black">
      <TitleBar />
      <MenuBar />
      <MainToolbar />
      <div className="mr-[3px] flex flex-1 flex-col border-l-2 border-[#8c8c96] pl-px">
        <WindowTabs />
        <main className="flex flex-1 flex-col border border-[#8ba0bd]">
          <PupilToolbar />
          <div className="flex flex-1">
            <PupilPane />
            <Navigator />
          </div>
        </main>
      </div>
      <StatusBar />
      <svg className="absolute h-0 w-0" aria-hidden="true">
        <linearGradient id="navBlue" x1="0" x2="1" y1="0" y2="1">
          <stop offset="0" stopColor="#9cc4f4" />
          <stop offset="1" stopColor="#2059c0" />
        </linearGradient>
      </svg>
    </div>
  );
};

export default App;
